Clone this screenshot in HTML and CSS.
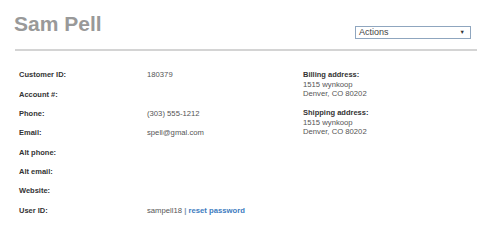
FILE: index.html
```html
<!DOCTYPE html>
<html>
<head>
<meta charset="utf-8">
<link rel="stylesheet" href="styles.css">
</head>
<body>
<div class="page">
  <div class="header">
    <h1 class="title">Sam Pell</h1>
    <div class="select">
      <span class="select-text">Actions</span>
      <span class="select-arrow">&#9660;</span>
    </div>
  </div>
  <div class="details">
    <div class="info">
      <div class="label">Customer ID:</div><div class="value">180379</div>
      <div class="label">Account #:</div><div class="value"></div>
      <div class="label">Phone:</div><div class="value">(303) 555-1212</div>
      <div class="label">Email:</div><div class="value">spell@gmal.com</div>
      <div class="label">Alt phone:</div><div class="value"></div>
      <div class="label">Alt email:</div><div class="value"></div>
      <div class="label">Website:</div><div class="value"></div>
      <div class="label">User ID:</div><div class="value">sampell18 <span class="sep">|</span> <a class="link" href="#">reset password</a></div>
    </div>
    <div class="addresses">
      <div class="address">
        <div class="addr-label">Billing address:</div>
        <div class="addr-line">1515 wynkoop</div>
        <div class="addr-line">Denver, CO 80202</div>
      </div>
      <div class="address">
        <div class="addr-label">Shipping address:</div>
        <div class="addr-line">1515 wynkoop</div>
        <div class="addr-line">Denver, CO 80202</div>
      </div>
    </div>
  </div>
</div>
</body>
</html>
```
FILE: styles.css
```css
html, body {
  margin: 0;
  padding: 0;
  background: #ffffff;
}
body {
  font-family: "Liberation Sans", Arial, sans-serif;
  color: #555;
}
.page {
  width: 462px;
  padding-left: 15px;
}
.header {
  display: flex;
  align-items: flex-start;
  height: 37px;
  padding-top: 12px;
  border-bottom: 2px solid #d4d4d4;
}
.title {
  margin: 0 0 0 -1px;
  font-size: 21px;
  line-height: 24px;
  font-weight: bold;
  color: #999999;
}
.select {
  margin-left: auto;
  margin-right: 6px;
  margin-top: 14px;
  width: 114px;
  height: 11px;
  border: 1px solid #8fa6bf;
  display: flex;
  align-items: center;
  justify-content: space-between;
  box-sizing: content-box;
}
.select-text {
  font-size: 9px;
  line-height: 11px;
  color: #444;
  padding-left: 3px;
}
.select-arrow {
  font-size: 5.5px;
  line-height: 11px;
  color: #333;
  padding-right: 5px;
}
.details {
  display: flex;
  margin-top: 14.35px;
}
.info {
  display: grid;
  grid-template-columns: 128px 156px;
  grid-auto-rows: 19.3px;
  align-items: center;
  padding-left: 4px;
}
.label {
  font-size: 7.5px;
  font-weight: bold;
  color: #333;
}
.value {
  font-size: 7.7px;
  color: #555;
}
.sep {
  font-weight: bold;
  color: #7a95b0;
}
.link {
  font-weight: bold;
  color: #3d7cc0;
  text-decoration: none;
}
.addresses {
  display: flex;
  flex-direction: column;
  gap: 9.5px;
  padding-top: 4.9px;
}
.address {
  line-height: 9.5px;
}
.addr-label {
  font-size: 7.5px;
  font-weight: bold;
  color: #333;
}
.addr-line {
  font-size: 7.7px;
  color: #555;
}
```
